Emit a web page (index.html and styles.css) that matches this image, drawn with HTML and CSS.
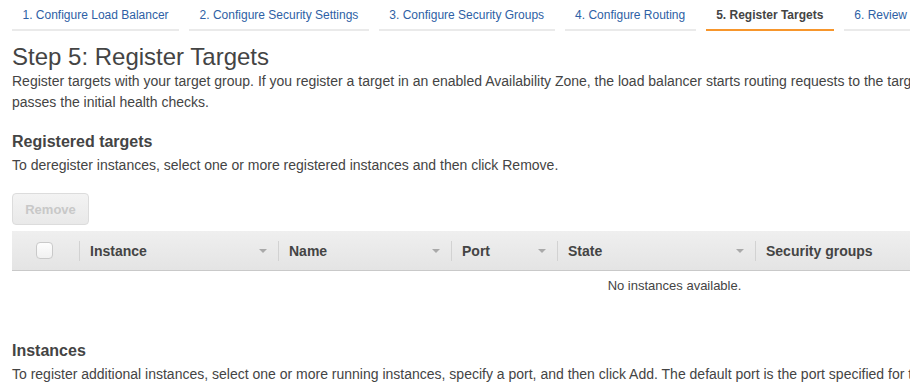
FILE: index.html
```html
<!DOCTYPE html>
<html lang="en">
<head>
  <meta charset="UTF-8">
  <title>Step 5: Register Targets</title>
  <link rel="stylesheet" href="styles.css">
</head>
<body>
  <div class="page">
    <ul class="wizard-tabs">
      <li class="tab"><a href="#">1. Configure Load Balancer</a></li>
      <li class="tab"><a href="#">2. Configure Security Settings</a></li>
      <li class="tab"><a href="#">3. Configure Security Groups</a></li>
      <li class="tab"><a href="#">4. Configure Routing</a></li>
      <li class="tab active"><a href="#">5. Register Targets</a></li>
      <li class="tab"><a href="#">6. Review</a></li>
    </ul>

    <h1>Step 5: Register Targets</h1>
    <p class="intro">Register targets with your target group. If you register a target in an enabled Availability Zone, the load balancer starts routing requests to the targets as soon as the registration process completes and the target<br>passes the initial health checks.</p>

    <h2 class="section-title">Registered targets</h2>
    <p class="section-text">To deregister instances, select one or more registered instances and then click Remove.</p>
    <button class="btn" disabled>Remove</button>

    <table class="grid">
      <colgroup>
        <col class="col-check">
        <col class="col-instance">
        <col class="col-name">
        <col class="col-port">
        <col class="col-state">
        <col>
      </colgroup>
      <thead>
        <tr>
          <th class="check-cell"><span class="checkbox"></span></th>
          <th><div class="th-inner">Instance<span class="sort"></span></div></th>
          <th><div class="th-inner">Name<span class="sort"></span></div></th>
          <th><div class="th-inner">Port<span class="sort"></span></div></th>
          <th><div class="th-inner">State<span class="sort"></span></div></th>
          <th><div class="th-inner">Security groups</div></th>
        </tr>
      </thead>
      <tbody>
        <tr>
          <td class="empty" colspan="6">No instances available.</td>
        </tr>
      </tbody>
    </table>

    <h2 class="section-title instances-title">Instances</h2>
    <p class="section-text">To register additional instances, select one or more running instances, specify a port, and then click Add. The default port is the port specified for the target group.</p>
  </div>
</body>
</html>
```

FILE: styles.css
```css
html, body {
  overflow: hidden;
}

body {
  margin: 0;
  font-family: "Liberation Sans", Arial, sans-serif;
  color: #444;
  background: #fff;
}

.page {
  width: 1325px;
  padding: 0 12px;
}

/* wizard tabs */
.wizard-tabs {
  display: flex;
  gap: 10px;
  list-style: none;
  margin: 0;
  padding: 7px 0 0;
  white-space: nowrap;
}

.tab {
  padding: 0 10.5px 6px;
  border-bottom: 2px solid #eaeaea;
  line-height: 16px;
  font-size: 12px;
  text-align: center;
}

.tab a {
  color: #2e5fa5;
  text-decoration: none;
}

.tab.active {
  border-bottom-color: #f7962c;
}

.tab.active a {
  color: #444;
  font-weight: bold;
}

h1 {
  margin: 12px 0 0;
  font-size: 24px;
  font-weight: normal;
  line-height: 28px;
  color: #444;
}

.intro {
  margin: 0;
  font-size: 14px;
  line-height: 21px;
  white-space: nowrap;
}

.section-title {
  margin: 20px 0 0;
  font-size: 16px;
  line-height: 18px;
  font-weight: bold;
}

.section-text {
  margin: 4px 0 0;
  font-size: 14px;
  line-height: 21px;
  white-space: nowrap;
}

.btn {
  display: block;
  margin-top: 17px;
  width: 77px;
  height: 32px;
  padding: 0;
  border: 1px solid #dcdcdc;
  border-radius: 4px;
  background: linear-gradient(#f3f3f3, #e9e9e9);
  color: #c8c8c8;
  font-family: inherit;
  font-size: 13px;
  font-weight: bold;
}

/* grid */
.grid {
  width: 100%;
  margin-top: 6px;
  border-collapse: collapse;
  table-layout: fixed;
}

.col-check { width: 67px; }
.col-instance { width: 199px; }
.col-name { width: 173px; }
.col-port { width: 106px; }
.col-state { width: 198px; }

.grid thead tr {
  background: linear-gradient(#efefef, #e4e4e4);
  border-bottom: 1px solid #c9c9c9;
}

.grid th {
  height: 39px;
  padding: 0;
  text-align: left;
  font-size: 14px;
  font-weight: bold;
  color: #444;
}

.check-cell {
  padding-left: 24px !important;
}

.checkbox {
  display: block;
  width: 15px;
  height: 15px;
  border: 1px solid #c9c9c9;
  border-radius: 4px;
  background: linear-gradient(#fdfdfd, #f1f1f1);
}

.th-inner {
  display: flex;
  align-items: center;
  justify-content: space-between;
  height: 20px;
  padding: 0 11px 0 10px;
  border-left: 1px solid #d2d2d2;
}

.sort {
  width: 0;
  height: 0;
  border-left: 4px solid transparent;
  border-right: 4px solid transparent;
  border-top: 4px solid #a9a9a9;
}

.empty {
  padding: 4px 0 13px;
  text-align: center;
  font-size: 13px;
  line-height: 21px;
}

.instances-title {
  margin-top: 33px;
}
```
